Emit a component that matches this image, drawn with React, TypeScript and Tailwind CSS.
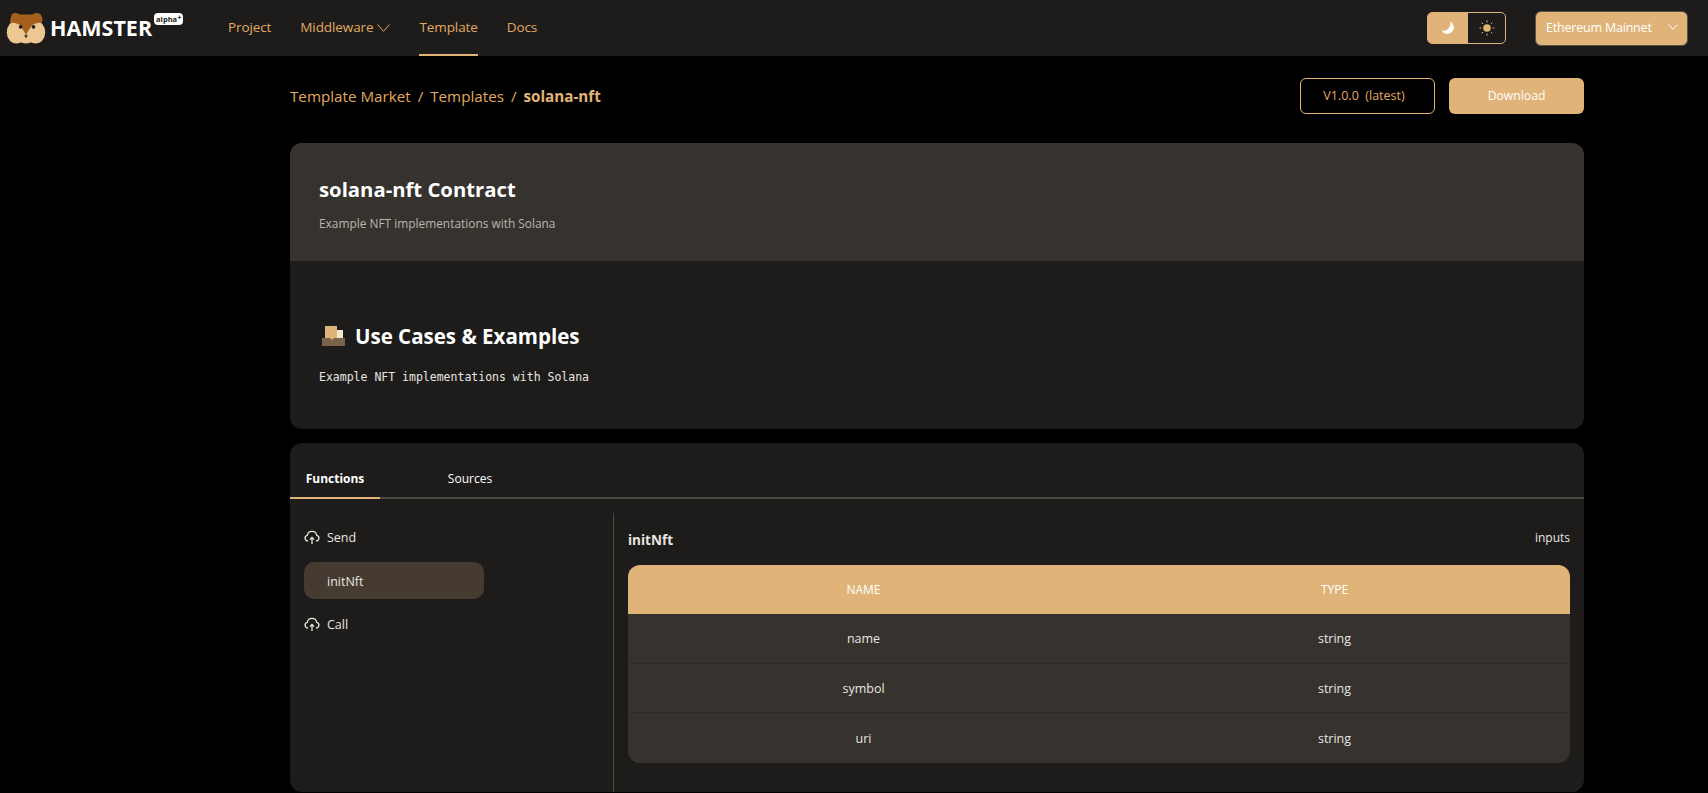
const navItems = ["Project", "Middleware", "Template", "Docs"];
const rows = [
  { name: "name", type: "string", height: "h-[49px]" },
  { name: "symbol", type: "string", height: "h-[49px]" },
  { name: "uri", type: "string", height: "h-[51px]" },
];

function Logo() {
  return (
    <svg width="40" height="31" viewBox="0 0 36 29" className="shrink-0">
      <ellipse cx="9" cy="18" rx="9" ry="10.5" fill="#ecc794" />
      <ellipse cx="27" cy="18" rx="9" ry="10.5" fill="#ecc794" />
      <path d="M14 21 H22 L24 27 Q18 30 12 27 Z" fill="#ecc794" />
      <path d="M4 4 Q4 0 8 0 Q11 0 12 1.5 H24 Q25 0 28 0 Q32 0 33 4 Q34 7 33 9 Q28 9 24 11 L18 20 L12 11 Q8 9 3 9 Q3 6 4 4 Z" fill="#a5601e" />
      <circle cx="13" cy="13" r="1.7" fill="#1d1c1a" />
      <circle cx="25" cy="13" r="1.7" fill="#1d1c1a" />
      <path d="M16.2 21 h3.6 l-1.8 2.4 Z" fill="#1d1c1a" />
    </svg>
  );
}

function Chevron({ width, height, className }: { width: number; height: number; className?: string }) {
  return (
    <svg width={width} height={height} viewBox={`0 0 ${width} ${height}`} fill="none" stroke="currentColor" strokeWidth="1" className={className}>
      <path d={`M0.5 0.5 L${width / 2} ${height - 0.7} L${width - 0.5} 0.5`} />
    </svg>
  );
}

function CloudUp() {
  return (
    <svg width="16" height="16" viewBox="0 0 16 16" fill="none" stroke="#e8e6e1" strokeWidth="1.3" className="shrink-0">
      <path d="M4 12 H3.6 A2.9 2.9 0 0 1 3.3 6.3 A4.8 4.8 0 0 1 12.7 6.3 A2.9 2.9 0 0 1 12.4 12 H12" />
      <path d="M8 15 V8.5 M5.8 10.6 L8 8.4 L10.2 10.6" />
    </svg>
  );
}

function MoonIcon() {
  return (
    <svg width="16" height="16" viewBox="0 0 16 16">
      <path d="M10 1.5 A6.5 6.5 0 1 1 1.6 10.5 A7 7 0 0 0 10 1.5 Z" fill="#fff" />
    </svg>
  );
}

function SunIcon() {
  return (
    <svg width="16" height="16" viewBox="0 0 16 16" stroke="#e0b478" strokeWidth="1">
      <circle cx="8" cy="8" r="3.8" fill="#e0b478" stroke="none" />
      <path d="M8 .5 V2.3 M8 13.7 V15.5 M.5 8 H2.3 M13.7 8 H15.5 M2.7 2.7 L4 4 M12 12 L13.3 13.3 M2.7 13.3 L4 12 M12 4 L13.3 2.7" />
    </svg>
  );
}

export default function App() {
  return (
    <div className="h-[793px] overflow-hidden bg-black font-['Open_Sans',sans-serif] text-[12.5px] text-[#e8e6e1]">
      {/* Header */}
      <header className="flex h-14 items-center bg-[#1d1c1a] pr-[20px] pl-[6px]">
        <div className="flex w-[222px] items-center">
          <Logo />
          <span className="ml-[4px] text-[21.5px] leading-none font-bold text-white">HAMSTER</span>
          <span className="mb-[18px] ml-[2px] rounded-[4px] bg-white px-[2px] text-[7.5px] leading-[12px] font-bold text-[#1d1c1a]">
            alpha<span className="relative -top-[2px]">+</span>
          </span>
        </div>
        <nav className="flex h-14 items-center gap-[29px] text-[13.5px] tracking-[-0.1px] text-[#e2a961]">
          {navItems.map((item) => (
            <div
              key={item}
              className={`flex h-14 items-center gap-[4px] ${item === "Template" ? "border-b-2 border-[#e0b478]" : "pb-[2px]"}`}
            >
              {item}
              {item === "Middleware" && <Chevron width={13} height={8} className="mt-[2px]" />}
            </div>
          ))}
        </nav>
        <div className="ml-auto flex h-[32px] w-[79px] overflow-hidden rounded-[5px] border border-[#e0b478]">
          <div className="flex w-[40px] items-center justify-center bg-[#e0b478]">
            <MoonIcon />
          </div>
          <div className="flex flex-1 items-center justify-center">
            <SunIcon />
          </div>
        </div>
        <div className="ml-[29px] flex h-[35px] w-[153px] items-center justify-between rounded-[6px] border border-[#55504a] bg-[#e0b478] pr-[9px] pl-[10px] text-[12.5px] tracking-[-0.2px] text-white">
          Ethereum Mainnet
          <Chevron width={10} height={6} className="mb-[3px]" />
        </div>
      </header>

      <main className="ml-[290px] w-[1294px]">
        {/* Breadcrumb */}
        <div className="flex h-[87px] items-center pb-[7px]">
          <div className="flex items-center gap-[7px] text-[15.2px] text-[#e2a961]">
            <span>Template Market</span>
            <span>/</span>
            <span>Templates</span>
            <span>/</span>
            <span className="font-bold text-[#e0b478]">solana-nft</span>
          </div>
          <div className="ml-auto flex gap-[14px] text-[12.5px]">
            <div className="flex h-[36px] w-[135px] items-center justify-center rounded-[6px] border border-[#e0b478] pr-[7px] whitespace-pre text-[#e2a961]">
              V1.0.0  (latest)
            </div>
            <div className="flex h-[36px] w-[135px] items-center justify-center rounded-[6px] bg-[#e0b478] text-[12.2px] text-white">
              Download
            </div>
          </div>
        </div>

        {/* Contract info */}
        <section className="overflow-hidden rounded-[12px] bg-[#1d1c1a]">
          <div className="h-[118px] bg-[#36322d] pt-[31px] pl-[29px]">
            <h1 className="text-[20.3px] leading-[30px] font-bold text-white">solana-nft Contract</h1>
            <p className="mt-[10px] text-[11.9px] leading-[18px] text-[#b9b6b0]">Example NFT implementations with Solana</p>
          </div>
          <div className="h-[168px] pt-[60px] pl-[29px]">
            <div className="flex items-center gap-[10px]">
              <svg width="23" height="20" viewBox="0 0 23 20" className="ml-[3px] shrink-0">
                <rect x="3" y="0" width="12" height="14" fill="#e0b478" />
                <rect x="15" y="4" width="6" height="10" fill="#f5e6cc" />
                <path d="M0 12 H8 L10 14 L12 12 H23 V20 H0 Z" fill="#7a6348" />
              </svg>
              <h2 className="text-[20.5px] leading-[30px] font-bold text-white">Use Cases &amp; Examples</h2>
            </div>
            <p className="mt-[17px] font-['DejaVu_Sans_Mono',monospace] text-[11.5px] leading-[18px] text-[#e8e6e1]">
              Example NFT implementations with Solana
            </p>
          </div>
        </section>

        {/* Functions */}
        <section className="mt-[14px] h-[349px] rounded-[12px] bg-[#1d1c1a]">
          <div className="flex h-[56px] border-b-2 border-[#4a4844] text-[12px] text-white">
            <div className="-mb-[2px] flex w-[90px] items-center justify-center border-b-2 border-[#e0b478] pt-[17px] font-bold">
              Functions
            </div>
            <div className="flex w-[180px] items-center justify-center pt-[17px]">Sources</div>
          </div>
          <div className="flex pt-[14px]">
            <aside className="h-[279px] w-[324px] border-r border-[#4a4844] pt-[10px] pl-[14px]">
              <div className="flex h-[28px] items-center gap-[7px]">
                <CloudUp />
                <span className="pt-[2px]">Send</span>
              </div>
              <div className="mt-[11px] flex h-[37px] w-[180px] items-center rounded-[10px] bg-[#453b30] pt-[3px] pl-[23px]">
                initNft
              </div>
              <div className="mt-[9px] flex h-[32px] items-center gap-[7px]">
                <CloudUp />
                <span className="pt-[2px]">Call</span>
              </div>
            </aside>
            <div className="flex-1 px-[14px]">
              <div className="flex h-[52px] items-start justify-between pt-[16px]">
                <span className="pt-[2px] text-[13.5px] leading-[18px] font-bold">initNft</span>
                <span className="text-[12px]">inputs</span>
              </div>
              <div className="overflow-hidden rounded-[12px] bg-[#36322d]">
                <div className="grid h-[49px] grid-cols-2 items-center bg-[#e0b478] text-center text-[12px] text-white">
                  <span>NAME</span>
                  <span>TYPE</span>
                </div>
                {rows.map((row, i) => (
                  <div
                    key={row.name}
                    className={`grid ${row.height} grid-cols-2 items-center pt-[2px] text-center ${i > 0 ? "border-t border-[#2f2c28]" : ""}`}
                  >
                    <span>{row.name}</span>
                    <span>{row.type}</span>
                  </div>
                ))}
              </div>
            </div>
          </div>
        </section>
      </main>
    </div>
  );
}
